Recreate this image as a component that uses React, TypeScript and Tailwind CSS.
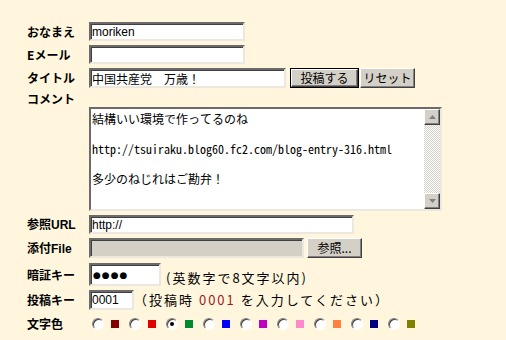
import type { ReactNode } from "react"

const jp = "font-['Noto_Sans_CJK_JP','Noto_Sans',sans-serif]"

const inset =
  "border-2 border-t-[#6b6b6b] border-l-[#6b6b6b] border-b-[#ece8e0] border-r-[#ece8e0] shadow-[inset_1px_1px_0_#404040]"

const raised =
  "bg-[#d4d0c8] border border-t-white border-l-white border-b-[#404040] border-r-[#404040] shadow-[inset_-1px_-1px_0_#808080]"

const colors = ["#800000", "#e00000", "#008a30", "#0000ff", "#c000c0", "#ff88cc", "#ff8040", "#000080", "#808000"]

function Label({ children }: { children: ReactNode }) {
  return <div className={`w-[62px] shrink-0 text-[12px] font-bold leading-none text-black ${jp}`}>{children}</div>
}

function Radio({ checked }: { checked?: boolean }) {
  return (
    <span className="flex h-[12px] w-[12px] items-center justify-center rounded-full border border-t-[#808080] border-l-[#808080] border-b-white border-r-white bg-white shadow-[inset_1px_1px_0_#404040]">
      {checked && <span className="h-[4px] w-[4px] rounded-full bg-black" />}
    </span>
  )
}

function ArrowButton({ up }: { up?: boolean }) {
  return (
    <div className={`flex h-[16px] w-[16px] shrink-0 items-center justify-center ${raised}`}>
      <svg width="7" height="4" viewBox="0 0 7 4">
        {up ? <path d="M3.5 0 L7 4 L0 4 Z" fill="#808080" /> : <path d="M0 0 L7 0 L3.5 4 Z" fill="#808080" />}
      </svg>
    </div>
  )
}

export default function App() {
  return (
    <div className={`min-h-screen w-full bg-[#fff6dd] pl-[27px] pt-[22px] ${jp}`}>
      {/* おなまえ */}
      <div className="flex h-[19px] items-center">
        <Label>おなまえ</Label>
        <input
          defaultValue="moriken"
          className={`h-full w-[156px] bg-white px-[1px] text-[12px] text-black outline-none ${inset} font-['Liberation_Sans','Noto_Sans_CJK_JP',sans-serif]`}
        />
      </div>

      {/* Eメール */}
      <div className="mt-[4px] flex h-[19px] items-center">
        <Label>Eメール</Label>
        <input className={`h-full w-[156px] bg-white px-[1px] text-[12px] outline-none ${inset}`} />
      </div>

      {/* タイトル */}
      <div className="mt-[4px] flex h-[20px] items-center">
        <Label>タイトル</Label>
        <input
          defaultValue="中国共産党　万歳！"
          className={`h-full w-[197px] bg-white px-[1px] text-[12px] text-black outline-none ${inset}`}
        />
        <div className="ml-[4px] h-full border border-black">
          <button className={`flex h-full w-[67px] items-center justify-center text-[12px] leading-none text-black ${raised}`}>
            投稿する
          </button>
        </div>
        <button className={`ml-[1px] flex h-full w-[55px] items-center justify-center text-[12px] leading-none text-black ${raised}`}>
          リセット
        </button>
      </div>

      {/* コメント */}
      <div className="mt-[3px] flex h-[16px] items-center">
        <Label>コメント</Label>
      </div>
      <div className={`ml-[62px] flex h-[104px] w-[353px] bg-white ${inset}`}>
        <textarea
          readOnly
          defaultValue={"結構いい環境で作ってるのね\n\nhttp://tsuiraku.blog60.fc2.com/blog-entry-316.html\n\n多少のねじれはご勘弁！"}
          className="h-full flex-1 resize-none overflow-hidden bg-white pl-[1px] pt-[2px] text-[12px] leading-[15px] text-black outline-none font-['Noto_Sans_Mono_CJK_JP','Noto_Sans_CJK_JP',monospace]"
        />
        <div className="flex w-[16px] flex-col bg-[repeating-conic-gradient(#d4d0c8_0%_25%,#ffffff_0%_50%)] bg-[length:2px_2px]">
          <ArrowButton up />
          <div className="flex-1" />
          <ArrowButton />
        </div>
      </div>

      {/* 参照URL */}
      <div className="mt-[4px] flex h-[19px] items-center">
        <Label>
          参照<span className="font-['Liberation_Sans',sans-serif]">URL</span>
        </Label>
        <input
          defaultValue="http://"
          className={`h-full w-[265px] bg-white px-[1px] text-[12px] text-black outline-none ${inset} font-['Liberation_Sans',sans-serif]`}
        />
      </div>

      {/* 添付File */}
      <div className="mt-[4px] flex h-[20px] items-center">
        <Label>
          添付<span className="font-['Liberation_Sans',sans-serif]">File</span>
        </Label>
        <div className={`h-full w-[215px] bg-[#d4d0c8] ${inset}`} />
        <button className={`ml-[3px] flex h-full w-[55px] items-center justify-center text-[12px] leading-none text-black ${raised}`}>
          参照...
        </button>
      </div>

      {/* 暗証キー */}
      <div className="mt-[5px] flex h-[23px] items-center">
        <Label>暗証キー</Label>
        <input
          readOnly
          defaultValue="●●●●"
          className={`h-full w-[72px] bg-white px-[2px] text-[9px] tracking-[1px] text-black outline-none ${inset} font-['DejaVu_Sans',sans-serif]`}
        />
        <span className="ml-[5px] mt-[6px] text-[13px] tracking-[2px] text-black">(英数字で8文字以内)</span>
      </div>

      {/* 投稿キー */}
      <div className="mt-[4px] flex h-[20px] items-center">
        <Label>投稿キー</Label>
        <input
          defaultValue="0001"
          className={`h-full w-[45px] bg-white px-[1px] text-[12px] text-black outline-none ${inset} font-['Liberation_Sans',sans-serif]`}
        />
        <span className="ml-[0px] text-[13px] tracking-[2px] text-black">
          （投稿時 <span className="text-[#a01818]">0001</span> を入力してください）
        </span>
      </div>

      {/* 文字色 */}
      <div className="mt-[6px] flex h-[16px] items-center">
        <Label>文字色</Label>
        <div className="ml-[3px] flex items-center gap-[10px]">
          {colors.map((c, i) => (
            <div key={c} className="flex items-center gap-[7px]">
              <Radio checked={i === 2} />
              <span className="h-[8px] w-[8px]" style={{ backgroundColor: c }} />
            </div>
          ))}
        </div>
      </div>
    </div>
  )
}
